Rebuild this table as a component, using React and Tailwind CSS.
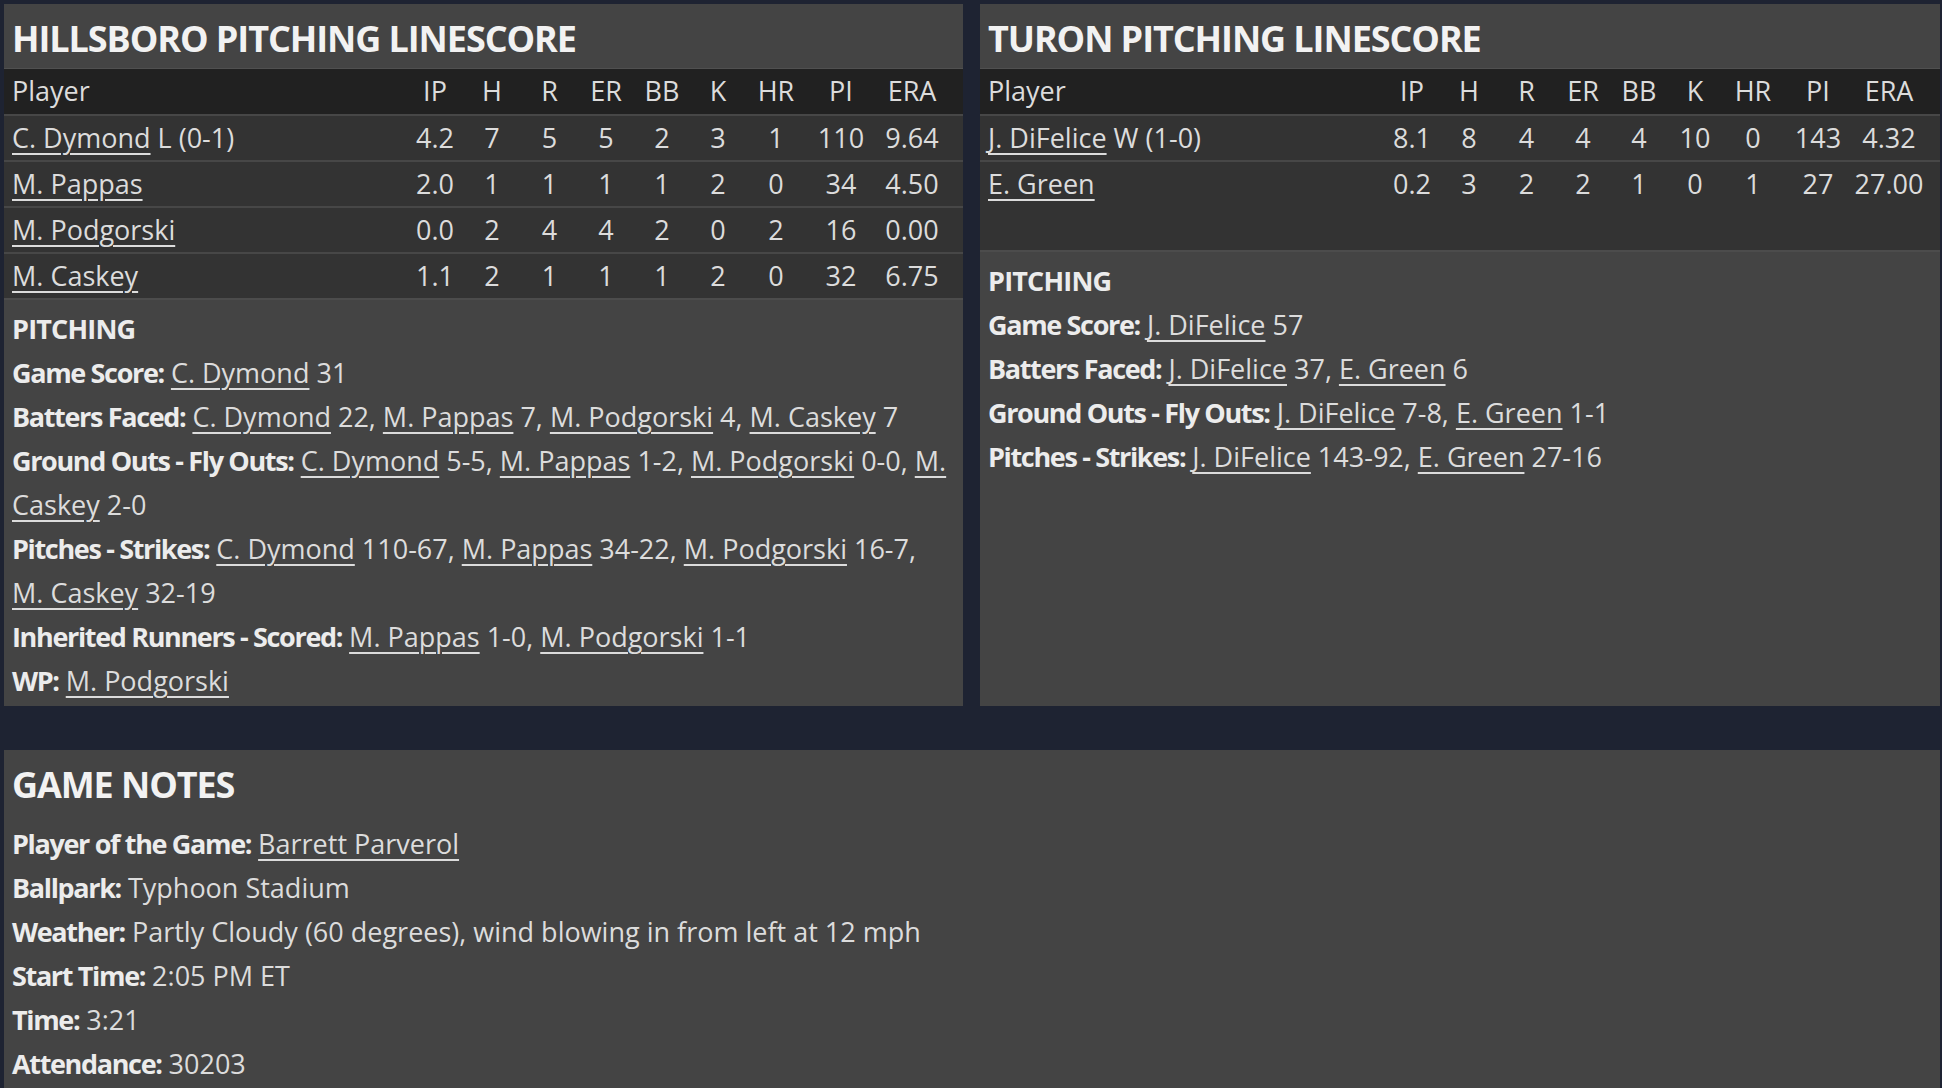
import React from "react";

const cols = ["IP", "H", "R", "ER", "BB", "K", "HR", "PI", "ERA"];

const hillsboro = [
    {name: "C. Dymond", note: "L (0-1)", stats: ["4.2", "7", "5", "5", "2", "3", "1", "110", "9.64"]},
    {name: "M. Pappas", stats: ["2.0", "1", "1", "1", "1", "2", "0", "34", "4.50"]},
    {name: "M. Podgorski", stats: ["0.0", "2", "4", "4", "2", "0", "2", "16", "0.00"]},
    {name: "M. Caskey", stats: ["1.1", "2", "1", "1", "1", "2", "0", "32", "6.75"]},
];

const turon = [
    {name: "J. DiFelice", note: "W (1-0)", stats: ["8.1", "8", "4", "4", "4", "10", "0", "143", "4.32"]},
    {name: "E. Green", stats: ["0.2", "3", "2", "2", "1", "0", "1", "27", "27.00"]},
];

// third entry of an item = keep name and stat together on one line
const hillsboroNotes = [
    {label: "Game Score:", items: [["C. Dymond", "31"]]},
    {label: "Batters Faced:", items: [["C. Dymond", "22"], ["M. Pappas", "7"], ["M. Podgorski", "4"], ["M. Caskey", "7"]]},
    {label: "Ground Outs - Fly Outs:", items: [["C. Dymond", "5-5"], ["M. Pappas", "1-2"], ["M. Podgorski", "0-0"], ["M. Caskey", "2-0"]]},
    {label: "Pitches - Strikes:", items: [["C. Dymond", "110-67"], ["M. Pappas", "34-22"], ["M. Podgorski", "16-7"], ["M. Caskey", "32-19", true]]},
    {label: "Inherited Runners - Scored:", items: [["M. Pappas", "1-0"], ["M. Podgorski", "1-1"]]},
    {label: "WP:", items: [["M. Podgorski", ""]]},
];

const turonNotes = [
    {label: "Game Score:", items: [["J. DiFelice", "57"]]},
    {label: "Batters Faced:", items: [["J. DiFelice", "37"], ["E. Green", "6"]]},
    {label: "Ground Outs - Fly Outs:", items: [["J. DiFelice", "7-8"], ["E. Green", "1-1"]]},
    {label: "Pitches - Strikes:", items: [["J. DiFelice", "143-92"], ["E. Green", "27-16"]]},
];

const Link = ({children}) => (
    <span className="underline decoration-2 underline-offset-[5px]">{children}</span>
);

const Label = ({children}) => (
    <span className="font-bold tracking-[-0.05em] text-[#ececec]">{children}</span>
);

const gridCols = "grid grid-cols-[1fr_56px_58px_57px_56px_56px_56px_60px_70px_72px] pl-[8px] pr-[15px] items-center";

const Linescore = ({title, rows, notes, filler}) => (
    <div className="flex flex-col bg-[#444444]">
        <div className="h-[65px] flex items-center pl-[8px] pt-[5px] text-[36px] tracking-[-0.03em] font-bold text-[#f2f2f2] border-b border-[#505050]">
            {title}
        </div>
        <div className={`${gridCols} h-[45px] bg-[#212121] text-[#dcdcdc]`}>
            <div>Player</div>
            {cols.map((c) => (
                <div key={c} className="text-center">{c}</div>
            ))}
        </div>
        {rows.map((r) => (
            <div key={r.name} className={`${gridCols} h-[46px] bg-[#333333] border-t-2 border-[#474747] text-[#dcdcdc]`}>
                <div className="whitespace-nowrap">
                    <Link>{r.name}</Link>
                    {r.note && <span> {r.note}</span>}
                </div>
                {r.stats.map((s, i) => (
                    <div key={i} className="text-center">{s}</div>
                ))}
            </div>
        ))}
        {filler && <div className="h-[44px] bg-[#333333]" />}
        <div className="flex-1 border-t-2 border-[#4c4c4c] pl-[8px] pr-[4px] pt-[7px] pb-[3px] leading-[44px] text-[#dcdcdc]">
            <div className="font-bold tracking-[-0.03em] text-[#ececec]">PITCHING</div>
            {notes.map((n) => (
                <div key={n.label}>
                    <Label>{n.label}</Label>{" "}
                    {n.items.map(([name, stat, keep], i) => (
                        <React.Fragment key={name}>
                            <span className={keep ? "whitespace-nowrap" : ""}>
                                <Link>{name}</Link>
                                {stat && ` ${stat}`}
                            </span>
                            {i < n.items.length - 1 && ", "}
                        </React.Fragment>
                    ))}
                </div>
            ))}
        </div>
    </div>
);

const NoteLine = ({label, children}) => (
    <div>
        <Label>{label}</Label> {children}
    </div>
);

export default function App() {
    return (
        <div className="min-h-screen bg-[#1e2332] pt-[4px] pl-[4px] pr-[2px] font-['Open_Sans',sans-serif] text-[27px]">
            <div className="grid grid-cols-[959px_960px] gap-[17px]">
                <Linescore title="HILLSBORO PITCHING LINESCORE" rows={hillsboro} notes={hillsboroNotes} />
                <Linescore title="TURON PITCHING LINESCORE" rows={turon} notes={turonNotes} filler />
            </div>
            <div className="mt-[44px] bg-[#444444] pl-[8px] pb-[6px] text-[#dcdcdc] leading-[44px]">
                <div className="h-[72px] flex items-center pb-[2px] text-[36px] tracking-[-0.03em] font-bold text-[#f2f2f2]">GAME NOTES</div>
                <NoteLine label="Player of the Game:"><Link>Barrett Parverol</Link></NoteLine>
                <NoteLine label="Ballpark:">Typhoon Stadium</NoteLine>
                <NoteLine label="Weather:">Partly Cloudy (60 degrees), wind blowing in from left at 12 mph</NoteLine>
                <NoteLine label="Start Time:">2:05 PM ET</NoteLine>
                <NoteLine label="Time:">3:21</NoteLine>
                <NoteLine label="Attendance:">30203</NoteLine>
            </div>
        </div>
    );
}
